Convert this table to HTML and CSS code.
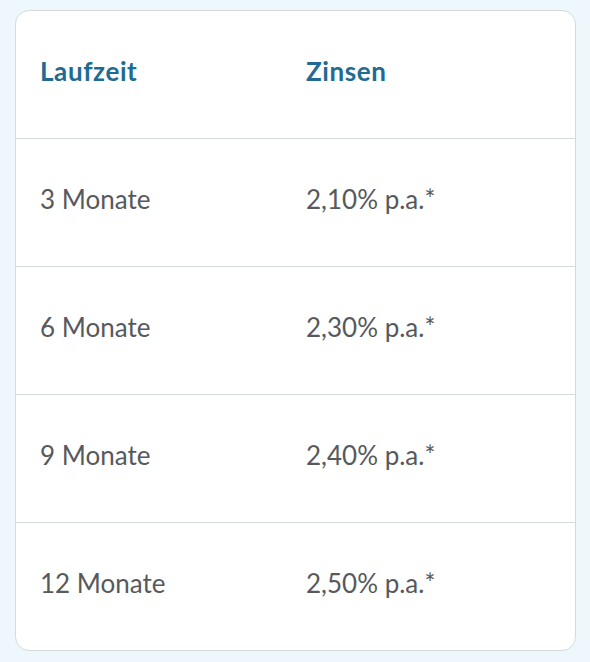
FILE: index.html
```html
<!DOCTYPE html>
<html lang="de">
<head>
<meta charset="utf-8">
<link rel="stylesheet" href="styles.css">
</head>
<body>
<div class="card">
  <div class="row head">
    <div class="cell">Laufzeit</div>
    <div class="cell">Zinsen</div>
  </div>
  <div class="row">
    <div class="cell">3 Monate</div>
    <div class="cell">2,10% p.a.*</div>
  </div>
  <div class="row">
    <div class="cell">6 Monate</div>
    <div class="cell">2,30% p.a.*</div>
  </div>
  <div class="row">
    <div class="cell">9 Monate</div>
    <div class="cell">2,40% p.a.*</div>
  </div>
  <div class="row">
    <div class="cell">12 Monate</div>
    <div class="cell">2,50% p.a.*</div>
  </div>
</div>
</body>
</html>
```
FILE: styles.css
```css
html, body {
  margin: 0;
  padding: 0;
}
body {
  background: #eef8fc;
  font-family: Lato, "Open Sans", sans-serif;
  padding: 10px 14px 11px 15px;
}
.card {
  background: #ffffff;
  border: 1px solid #d5dadd;
  border-radius: 14px;
  overflow: hidden;
}
.row {
  display: grid;
  grid-template-columns: 266px 1fr;
  align-items: center;
  box-sizing: border-box;
  height: 128px;
  padding: 0 0 7px 24px;
  border-top: 1px solid #d5dadd;
  font-size: 26px;
  color: #57595c;
}
.row.head {
  border-top: none;
  height: 127px;
  color: #216b92;
  font-weight: 700;
  letter-spacing: 0.6px;
}
```
